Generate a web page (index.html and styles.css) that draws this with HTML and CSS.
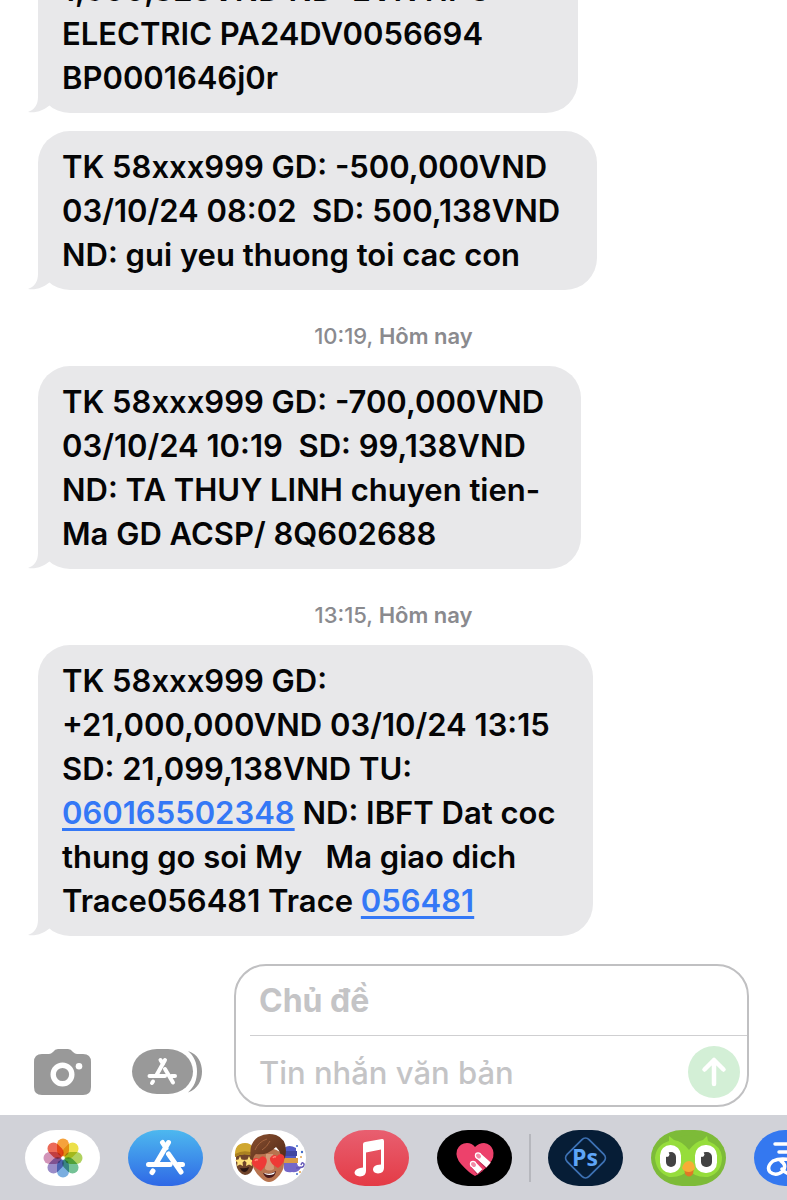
FILE: index.html
```html
<!DOCTYPE html>
<html lang="vi">
<head>
<meta charset="utf-8">
<meta name="viewport" content="width=device-width, initial-scale=1">
<title>Tin nhắn</title>
<link rel="stylesheet" href="styles.css">
</head>
<body>
<svg class="defs" aria-hidden="true">
  <defs>
    <symbol id="tail" viewBox="0 0 22 34"><path d="M10 0V18C10 26 6 31 0 33C8 34.500 16 31 22 26V0Z"/></symbol>
    <linearGradient id="store-bg" x1="0" y1="0" x2="0" y2="1"><stop offset="0" stop-color="#4db8ef"/><stop offset="1" stop-color="#2f68e6"/></linearGradient>
    <linearGradient id="music-bg" x1="0" y1="0" x2="0" y2="1"><stop offset="0" stop-color="#e85f70"/><stop offset="1" stop-color="#e43b46"/></linearGradient>
    <linearGradient id="hair" x1="0" y1="0" x2="1" y2="1"><stop offset="0" stop-color="#8a5030"/><stop offset="1" stop-color="#4f2817"/></linearGradient>
    <clipPath id="pill"><rect width="75" height="56" rx="31" ry="28"/></clipPath>
  </defs>
</svg>
<main class="screen">
  <section class="thread" aria-label="Tin nhắn">
    <article class="bubble">
      <p>1,500,823VND ND: EVN HPC<br>ELECTRIC PA24DV0056694<br>BP0001646j0r</p>
      <svg class="tail" aria-hidden="true"><use href="#tail"/></svg>
    </article>
    <article class="bubble">
      <p>TK 58xxx999 GD: -500,000VND<br>03/10/24 08:02&nbsp; SD: 500,138VND<br>ND: gui yeu thuong toi cac con</p>
      <svg class="tail" aria-hidden="true"><use href="#tail"/></svg>
    </article>
    <time class="stamp">10:19, <b>Hôm nay</b></time>
    <article class="bubble">
      <p>TK 58xxx999 GD: -700,000VND<br>03/10/24 10:19&nbsp; SD: 99,138VND<br>ND: TA THUY LINH chuyen tien-<br>Ma GD ACSP/ 8Q602688</p>
      <svg class="tail" aria-hidden="true"><use href="#tail"/></svg>
    </article>
    <time class="stamp">13:15, <b>Hôm nay</b></time>
    <article class="bubble">
      <p>TK 58xxx999 GD:<br>+21,000,000VND 03/10/24 13:15<br>SD: 21,099,138VND TU:<br><a href="tel:060165502348">060165502348</a> ND: IBFT Dat coc<br>thung go soi My &nbsp; Ma giao dich<br>Trace056481 Trace <a href="tel:056481">056481</a></p>
      <svg class="tail" aria-hidden="true"><use href="#tail"/></svg>
    </article>
  </section>

  <form class="composer">
    <div class="tools">
      <button type="button" class="tool" aria-label="Máy ảnh">
        <svg width="57" height="46" viewBox="0 0 57 46"><path fill="#999" d="M8 5H15Q17 5 19 3Q21 0 24 0H34Q37 0 39 3Q41 5 43 5H49Q57 5 57 13V38Q57 46 49 46H8Q0 46 0 38V13Q0 5 8 5Z"/><circle cx="28.500" cy="25.500" r="9.300" fill="none" stroke="#fff" stroke-width="5.400"/><circle cx="45" cy="17.300" r="3.300" fill="#fff"/></svg>
      </button>
      <button type="button" class="tool" aria-label="Ứng dụng">
        <svg width="70" height="46" viewBox="0 0 70 46"><rect width="61" height="45" rx="25" ry="22.500" fill="#999"/><path fill="#999" d="M56 2C66 5 70 14 70 22.500S66 40 56 43.500C62 38 65 31 65 22.500S62 7 56 2Z"/><g fill="none" stroke="#fff" stroke-width="4" stroke-linecap="round"><path d="M33 11L24 27M28.500 11L31 15M33 20L41 33.500M17.500 27H33M39.500 27H43M21 32.500L20 34"/></g></svg>
      </button>
    </div>
    <div class="box">
      <input class="field subject" type="text" aria-label="Chủ đề" placeholder="Chủ đề">
      <div class="line">
        <input class="field" type="text" aria-label="Tin nhắn văn bản" placeholder="Tin nhắn văn bản">
        <button type="submit" class="send" aria-label="Gửi">
          <svg width="52" height="52" viewBox="0 0 52 52"><path d="M26 38V14M16.500 23.500L26 14L35.500 23.500" fill="none" stroke="#fff" stroke-width="4.500" stroke-linecap="round" stroke-linejoin="round"/></svg>
        </button>
      </div>
    </div>
  </form>

  <nav class="drawer" aria-label="Ứng dụng iMessage">
    <div class="apps">
      <button class="app" aria-label="Ảnh">
        <svg viewBox="0 0 75 56"><g clip-path="url(#pill)"><rect width="75" height="56" fill="#fff"/>
        <g class="petals" transform="translate(38 28)">
          <rect x="-6" y="-19.500" width="12" height="18" rx="6" fill="#f5a23c"/>
          <rect x="-6" y="-19.500" width="12" height="18" rx="6" fill="#ece04a" transform="rotate(45)"/>
          <rect x="-6" y="-19.500" width="12" height="18" rx="6" fill="#b0d260" transform="rotate(90)"/>
          <rect x="-6" y="-19.500" width="12" height="18" rx="6" fill="#74c296" transform="rotate(135)"/>
          <rect x="-6" y="-19.500" width="12" height="18" rx="6" fill="#7aaee0" transform="rotate(180)"/>
          <rect x="-6" y="-19.500" width="12" height="18" rx="6" fill="#9a8cc8" transform="rotate(225)"/>
          <rect x="-6" y="-19.500" width="12" height="18" rx="6" fill="#d294b8" transform="rotate(270)"/>
          <rect x="-6" y="-19.500" width="12" height="18" rx="6" fill="#ec6a58" transform="rotate(315)"/>
        </g><circle cx="38" cy="28" r="1.500" fill="#fff"/></g></svg>
      </button>
      <button class="app" aria-label="App Store">
        <svg viewBox="0 0 75 56"><g clip-path="url(#pill)"><rect width="75" height="56" fill="url(#store-bg)"/>
        <g fill="none" stroke="#fff" stroke-width="5" stroke-linecap="round"><path d="M40.500 12.500L27.500 34.500M34.500 12.500L38 18M40.500 24L53 42M20.500 34.500H42M50.500 34.500H54.500M25 41L24 42.500"/></g></g></svg>
      </button>
      <button class="app" aria-label="Memoji">
        <svg viewBox="0 0 75 56"><g clip-path="url(#pill)"><rect width="75" height="56" fill="#fff"/>
          <path fill="#70442b" d="M5 24H22V38Q20 45 14 45Q6 43 5 33Z"/><path fill="#d0a730" d="M4 27Q3 13 14 13Q20 13 22 18V26Q12 22 4 27Z"/><path fill="#aa8121" d="M4 24Q13 19 22 23V26Q12 22 4 27Z"/>
          <path id="star" fill="#ffe07a" d="M9 26L10.500 29.500L14 30L11.500 32.500L12 36L9 34.500L6 36L6.500 32.500L4 30L7.500 29.500Z"/><use href="#star" x="9"/><path fill="#2b1512" d="M9 38Q14 39 18 37Q17 42 13 42Q10 41 9 38Z"/>
          <path fill="#5159c5" d="M53 18Q58 14 65 18V28H54Z"/><path fill="#4047a1" d="M54 21H66V26H54Z"/><path fill="#d99b46" d="M53 28H67V33H53Z"/><path fill="#7468c9" d="M53 33H66Q67 38 70 36Q69 43 61 42Q54 43 53 39Z"/><path d="M65 38Q74 38 73 34Q71 31 70 35" fill="none" stroke="#6559b8" stroke-width="1.500"/>
          <g fill="#416cc7"><circle cx="66" cy="16" r="1"/><circle cx="71" cy="22" r="1.200"/><circle cx="66" cy="44" r="1"/></g><g fill="#e5a24a"><circle cx="70" cy="27" r="1"/><circle cx="69" cy="42" r="1"/></g>
          <path fill="#b8744f" d="M21 25Q37 11 53 25V34Q53 41 46 48Q38 56 30 48Q23 42 21 34Z"/><path fill="#d39a78" d="M35 24H42L43 39Q38 42 34 39Z"/>
          <path fill="url(#hair)" d="M20 29Q17 14 27 7Q36 2 45 5Q58 10 54 28L51 30Q50 22 45 17Q36 26 25 24Q22 26 22 31Z"/><path d="M24 20Q27 12 36 9M31 20Q36 17 39 11" fill="none" stroke="#a3643f" stroke-width="1"/>
          <path fill="#ee3a36" d="M30 41Q20 36 21 31Q23 26 28 29Q31 24 35 28Q38 33 30 41ZM47 38Q38 33 39 28Q42 23 46 26Q50 22 53 26Q55 32 47 38Z"/><path d="M24 31Q25 29 27 30M42 28Q43 26 45 27" stroke="#ff8376" stroke-width="1.500" fill="none"/>
          <path fill="#471718" d="M32 43Q39 45 45 41Q44 48 38 48Q34 48 32 43Z"/><path fill="#fff" d="M33 43Q39 45 44 42L43 44Q38 46 34 44Z"/></g></svg>
      </button>
      <button class="app" aria-label="Nhạc">
        <svg viewBox="0 0 75 56"><g clip-path="url(#pill)"><rect width="75" height="56" fill="url(#music-bg)"/><path fill="#fff" d="M29 14Q29 12.500 31 12L48 9Q50 8.800 50 11V38Q50 43 44 43.500Q39 43 39 39.500Q39 36 43 35L47 34.500V19.500L32 22.500V41Q32 46 26 46.500Q20.500 46 20.500 42.500Q21 39 26 38L29 37.500Z"/></g></svg>
      </button>
      <button class="app" aria-label="Digital Touch">
        <svg viewBox="0 0 75 56"><g clip-path="url(#pill)"><rect width="75" height="56"/><path fill="#ed416b" d="M38 46Q32 43 24 34Q18 27 20 20Q23 13 30 13Q35 13 38 17Q42 13 47 13Q54 14 56 20Q58 27 53 33Q46 42 38 46Z"/>
        <path d="M42 26.500L51 36M37 35L43 43" stroke="#ad254c" stroke-width="7"/><path d="M41 25.500L51.500 35M36 34L43 41.500" stroke="#fff" stroke-width="6.500"/><circle cx="41" cy="25.500" r="3.200" fill="#fff"/><circle cx="36" cy="34" r="3.200" fill="#fff"/><path d="M41 25.500L42 26.500M36 34L37 35" stroke="#f28ba6" stroke-width="4" stroke-linecap="round"/></g></svg>
      </button>
    </div>
    <span class="divider"></span>
    <div class="apps">
      <button class="app" aria-label="Photoshop Express">
        <svg viewBox="0 0 75 56"><g clip-path="url(#pill)"><rect width="75" height="56" fill="#061d36"/><rect x="22" y="12.500" width="31" height="31" rx="5" fill="none" stroke="#3c70b2" stroke-width="1.800" transform="rotate(45 37.500 28)"/><text class="ps" x="37" y="36" text-anchor="middle">Ps</text></g></svg>
      </button>
      <button class="app" aria-label="Duolingo">
        <svg viewBox="0 0 75 56"><g clip-path="url(#pill)"><rect width="75" height="56" fill="#7dbb38"/><path fill="#96dd3b" d="M18 6L23 10Q31 11 38 20Q45 11 52 10L56 6L57 11Q70 16 71 27Q71 43 57 47Q43 48 38 39Q31 48 18 47Q5 42 4 28Q5 15 18 11Z"/><path fill="#7dbb38" d="M24 10Q38 0 51 10Q44 11 38 17Q31 11 24 10Z"/>
        <rect x="9" y="15" width="21" height="28" rx="10.500" fill="#fff"/><rect x="44" y="15" width="22" height="28" rx="10.500" fill="#fff"/><rect x="15" y="22" width="10" height="15" rx="5" fill="#424242"/><rect x="50" y="22" width="11" height="15" rx="5" fill="#424242"/><circle cx="16" cy="24.500" r="2.400" fill="#fff"/><circle cx="51" cy="24.500" r="2.400" fill="#fff"/>
        <path fill="#df7827" d="M33 38H43L42 44Q38 49 34 44Z"/><path fill="#f7ad35" d="M31 38Q33 31 38 31T44 38Q43 41 38 42Q33 42 31 38Z"/></g></svg>
      </button>
      <button class="app" aria-label="Zalo">
        <svg viewBox="0 0 75 56"><g clip-path="url(#pill)"><rect width="75" height="56" fill="#3478f0"/><path d="M21 14H50M25 22H50" stroke="#fff" stroke-width="3.500" stroke-linecap="round"/><path d="M42 31Q27 27 19 31Q12 37 16 42Q22 47 29 41Q33 35 27 31M28 39Q32 45 44 45" stroke="#fff" stroke-width="3.500" fill="none" stroke-linecap="round"/></g></svg>
      </button>
    </div>
  </nav>
</main>
</body>
</html>
```
FILE: styles.css
```css
* { box-sizing: border-box; }
body {
  margin: 0;
  background: #fff;
  color: #050506;
  font-family: Inter, "Liberation Sans", sans-serif;
}
button { border: 0; padding: 0; background: none; cursor: pointer; }
svg { display: block; }
.defs { position: absolute; width: 0; height: 0; }
.screen {
  height: 100vh;
  display: flex;
  flex-direction: column;
  overflow: hidden;
}
.thread {
  flex: 1;
  min-height: 0;
  display: flex;
  flex-direction: column;
  justify-content: flex-end;
  align-items: flex-start;
  padding: 0 38px 28px;
  overflow: hidden;
}
.bubble {
  position: relative;
  flex: none;
  min-width: 76%;
  padding: 14px 37px 13px 24px;
  border-radius: 32px;
  background: #e8e8ea;
  font-size: 31px;
  font-weight: 600;
  line-height: 44px;
}
.bubble + .bubble { margin-top: 18px; }
.bubble p { margin: 0; }
.bubble a {
  color: #3478f6;
  text-decoration-thickness: 3px;
  text-underline-offset: 4px;
}
.tail {
  position: absolute;
  left: -10px;
  bottom: 0;
  width: 22px;
  height: 34px;
  fill: #e8e8ea;
}
.stamp {
  align-self: center;
  flex: none;
  padding: 32px 0 16px;
  color: #8a8a8e;
  font-size: 22px;
  font-weight: 500;
  line-height: 28px;
}
.stamp b { font-weight: 600; }
.composer {
  display: flex;
  align-items: flex-end;
  gap: 32px;
  padding: 0 38px 8px 34px;
}
.tools {
  display: flex;
  gap: 41px;
  padding-bottom: 12px;
}
.box {
  flex: 1;
  min-width: 0;
  border: 2px solid #c0c0c2;
  border-radius: 32px;
}
.field {
  display: block;
  flex: 1;
  width: 100%;
  min-width: 0;
  height: 66px;
  padding: 0 23px;
  border: 0;
  outline: 0;
  background: none;
  color: #050506;
  font: 500 31px Inter, "Liberation Sans", sans-serif;
}
.field::placeholder { color: #c4c4c6; opacity: 1; }
.subject { height: 69px; font-size: 32px; font-weight: 700; }
.line {
  display: flex;
  align-items: center;
  margin-left: 14px;
  padding: 3px 7px 0 0;
  border-top: 1px solid #cfcfd1;
}
.line .field { padding-left: 9px; }
.send {
  flex: none;
  width: 52px;
  height: 52px;
  border-radius: 50%;
  background: #d3efd6;
}
.drawer {
  display: flex;
  align-items: center;
  gap: 17px;
  height: 85px;
  padding-left: 25px;
  background: #d1d2d8;
}
.apps {
  display: flex;
  flex: none;
  gap: 28px;
}
.app {
  flex: none;
  width: 75px;
  height: 56px;
}
.petals rect { mix-blend-mode: multiply; }
.divider {
  flex: none;
  width: 2px;
  height: 48px;
  background: #b6b7bd;
}
.ps {
  fill: #5ea5f8;
  font: 700 23px "Open Sans", sans-serif;
}
```
